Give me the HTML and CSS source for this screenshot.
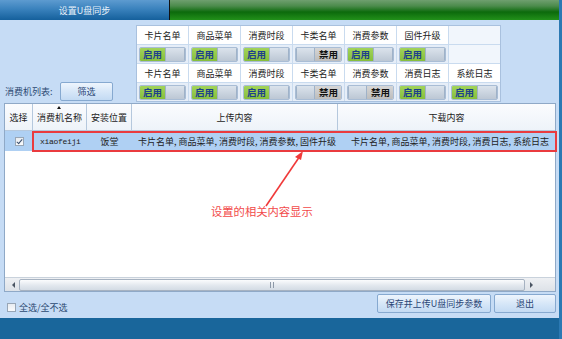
FILE: index.html
```html
<!DOCTYPE html>
<html lang="zh-CN">
<head>
  <meta charset="UTF-8">
  <title>设置U盘同步</title>
  <link rel="stylesheet" href="styles.css">
</head>
<body>

<div class="window">
  <div class="titlebar">
    <div class="tab">设置U盘同步</div>
    <div class="tab-rest"></div>
  </div>

  <div class="main">
    <div class="top">
      <div class="filter">
        <span class="filter-label">消费机列表:</span>
        <button class="btn btn-filter">筛选</button>
      </div>

      <div class="settings">
        <div class="cell head">卡片名单</div>
        <div class="cell head">商品菜单</div>
        <div class="cell head">消费时段</div>
        <div class="cell head">卡类名单</div>
        <div class="cell head">消费参数</div>
        <div class="cell head">固件升级</div>
        <div class="cell empty"></div>

        <div class="cell"><div class="toggle on"><span class="t-on">启用</span><span class="t-knob"></span></div></div>
        <div class="cell"><div class="toggle on"><span class="t-on">启用</span><span class="t-knob"></span></div></div>
        <div class="cell"><div class="toggle on"><span class="t-on">启用</span><span class="t-knob"></span></div></div>
        <div class="cell"><div class="toggle off"><span class="t-knob"></span><span class="t-off">禁用</span></div></div>
        <div class="cell"><div class="toggle on"><span class="t-on">启用</span><span class="t-knob"></span></div></div>
        <div class="cell"><div class="toggle on"><span class="t-on">启用</span><span class="t-knob"></span></div></div>
        <div class="cell empty"></div>

        <div class="cell head">卡片名单</div>
        <div class="cell head">商品菜单</div>
        <div class="cell head">消费时段</div>
        <div class="cell head">卡类名单</div>
        <div class="cell head">消费参数</div>
        <div class="cell head">消费日志</div>
        <div class="cell head">系统日志</div>

        <div class="cell"><div class="toggle on"><span class="t-on">启用</span><span class="t-knob"></span></div></div>
        <div class="cell"><div class="toggle on"><span class="t-on">启用</span><span class="t-knob"></span></div></div>
        <div class="cell"><div class="toggle on"><span class="t-on">启用</span><span class="t-knob"></span></div></div>
        <div class="cell"><div class="toggle off"><span class="t-knob"></span><span class="t-off">禁用</span></div></div>
        <div class="cell"><div class="toggle off"><span class="t-knob"></span><span class="t-off">禁用</span></div></div>
        <div class="cell"><div class="toggle on"><span class="t-on">启用</span><span class="t-knob"></span></div></div>
        <div class="cell"><div class="toggle on"><span class="t-on">启用</span><span class="t-knob"></span></div></div>
      </div>
    </div>

    <div class="grid">
      <div class="grid-head">
        <div class="gh">选择</div>
        <div class="gh sorted">消费机名称</div>
        <div class="gh">安装位置</div>
        <div class="gh">上传内容</div>
        <div class="gh">下载内容</div>
      </div>
      <div class="grid-body">
        <div class="grid-row selected">
          <div class="gc center"><span class="check checked"></span></div>
          <div class="gc mono">xiaofeiji</div>
          <div class="gc center">饭堂</div>
          <div class="gc">卡片名单, 商品菜单, 消费时段, 消费参数, 固件升级</div>
          <div class="gc right">卡片名单, 商品菜单, 消费时段, 消费日志, 系统日志</div>
        </div>

        <!-- annotation drawn over the grid -->
        <div class="mark"></div>
        <svg class="arrow" width="60" height="60" viewBox="0 0 60 60">
          <path d="M4 56 L38 6" stroke="#f03a3a" stroke-width="1.6" fill="none"/>
          <path d="M41 1 L33 7 L39 10 Z" fill="#f03a3a"/>
        </svg>
        <div class="note">设置的相关内容显示</div>
      </div>
      <div class="hscroll">
        <span class="arr arr-left"></span>
        <div class="thumb"><span class="grip"></span></div>
        <span class="arr arr-right"></span>
      </div>
    </div>

    <div class="footer">
      <label class="all"><span class="check"></span>全选/全不选</label>
      <div class="actions">
        <button class="btn btn-save">保存并上传U盘同步参数</button>
        <button class="btn btn-exit">退出</button>
      </div>
    </div>
  </div>

  <div class="bottombar"></div>
</div>

</body>
</html>
```

FILE: styles.css
```css
* {
  box-sizing: border-box;
}

body {
  margin: 0;
  font-family: "Noto Sans CJK SC", "Noto Sans", sans-serif;
  font-size: 9px;
  color: #222;
}

.window {
  width: 562px;
  height: 339px;
  display: flex;
  flex-direction: column;
  background: #c6dcf5;
  border-right: 3px solid #2b79b3;
}

/* title strip */
.titlebar {
  height: 20px;
  display: flex;
}

.tab {
  width: 170px;
  border-right: 1px solid #111;
  background: linear-gradient(#5d9bd0, #3a82bd 45%, #15609c);
  color: #e9f1fa;
  font-size: 9px;
  display: flex;
  align-items: center;
  justify-content: center;
}

.tab-rest {
  flex: 1;
  background: linear-gradient(#6f9f6f, #4c8b4c 30%, #0c6a0c 60%, #22901a);
}

.main {
  flex: 1;
  padding: 5px 3px 0 4px;
  display: flex;
  flex-direction: column;
}

/* top area: filter + settings table */
.top {
  height: 76px;
  display: flex;
  align-items: flex-start;
}

.filter {
  width: 132px;
  align-self: flex-end;
  display: flex;
  align-items: center;
  padding-left: 1px;
}

.filter-label {
  width: 55px;
  color: #2c4a72;
}

.btn {
  font-family: inherit;
  font-size: 9px;
  color: #2a4675;
  background: linear-gradient(#eef5fd, #d7e7f8 50%, #c3daf3);
  border: 1px solid #86a9d0;
  border-radius: 2px;
  padding: 0;
  height: 19px;
  cursor: pointer;
}

.btn-filter {
  width: 53px;
}

.settings {
  display: grid;
  grid-template-columns: repeat(7, 51px);
  grid-auto-rows: 18px;
  border: 1px solid #a9c1de;
  background: #c9dbef;
  gap: 1px;
}

.cell {
  background: #e6eef8;
  display: flex;
  align-items: center;
  justify-content: center;
}

.cell.head {
  background: #fff;
}

.cell.empty {
  background: #f1f6fc;
}

.toggle {
  width: 47px;
  height: 15px;
  display: flex;
  border: 1px solid #a9bdd5;
  border-radius: 2px;
  overflow: hidden;
  font-weight: bold;
  font-size: 9.5px;
}

.t-on {
  width: 25px;
  background: linear-gradient(#a2d35a, #86bf3c);
  color: #1d3f8c;
  display: flex;
  align-items: center;
  padding-left: 3px;
}

.t-knob {
  flex: 1;
  background: linear-gradient(#dbe3ec, #bcc7d4);
  border-left: 1px solid #9fb2c8;
  border-right: 1px solid #9fb2c8;
}

.t-off {
  width: 26px;
  background: linear-gradient(#d6d6d6, #bdbdbd);
  color: #111;
  display: flex;
  align-items: center;
  padding-left: 4px;
}

/* data grid */
.grid {
  margin-top: 2px;
  height: 189px;
  display: flex;
  flex-direction: column;
  border: 1px solid #8fa9c7;
  background: #fff;
}

.grid-head,
.grid-row {
  display: grid;
  grid-template-columns: 28px 54px 45px 206px 1fr;
}

.grid-head {
  height: 27px;
  background: linear-gradient(#fbfcfe, #eef3f9);
  border-bottom: 1px solid #b5c8dd;
}

.gh {
  display: flex;
  align-items: center;
  justify-content: center;
  border-right: 1px solid #b5c8dd;
  position: relative;
}

.gh:last-child {
  border-right: none;
}

.gh.sorted::before {
  content: "";
  position: absolute;
  top: 2px;
  left: 50%;
  margin-left: -3px;
  border-left: 2.5px solid transparent;
  border-right: 2.5px solid transparent;
  border-bottom: 3px solid #111;
}

.grid-body {
  flex: 1;
  position: relative;
}

.grid-row {
  height: 20px;
}

.grid-row.selected {
  background: #afd0f3;
}

.gc {
  display: flex;
  align-items: center;
  padding: 0 6px;
  white-space: nowrap;
  overflow: hidden;
}

.gc.center {
  justify-content: center;
  padding: 0;
}

.gc.right {
  justify-content: flex-end;
}

.gc.mono {
  font-family: "Liberation Mono", monospace;
  font-size: 8px;
  letter-spacing: -0.3px;
  padding-left: 7px;
}

.check {
  display: inline-block;
  width: 9px;
  height: 9px;
  border: 1px solid #98a6b6;
  background: linear-gradient(#e8ecf1, #fafbfc);
  position: relative;
}

.check.checked::after {
  content: "";
  position: absolute;
  left: 2px;
  top: 0px;
  width: 2px;
  height: 5px;
  border: solid #3a4f6e;
  border-width: 0 1.5px 1.5px 0;
  transform: rotate(40deg);
}

.mark {
  position: absolute;
  left: 27px;
  top: 0;
  width: 525px;
  height: 21px;
  border: 2px solid #ea3b3f;
}

.arrow {
  position: absolute;
  left: 257px;
  top: 19px;
}

.note {
  position: absolute;
  left: 206px;
  top: 72px;
  color: #f24a4a;
  font-size: 11.3px;
}

.hscroll {
  height: 14px;
  display: flex;
  align-items: center;
  background: linear-gradient(#eef0f3, #dde2e8);
  border-top: 1px solid #c9d2dc;
  padding: 0 2px;
}

.arr {
  width: 12px;
  display: flex;
  justify-content: center;
}

.arr-left::before {
  content: "";
  border-top: 3px solid transparent;
  border-bottom: 3px solid transparent;
  border-right: 3px solid #4a5563;
}

.arr-right::before {
  content: "";
  border-top: 3px solid transparent;
  border-bottom: 3px solid transparent;
  border-left: 3px solid #4a5563;
}

.thumb {
  width: 506px;
  height: 12px;
  border: 1px solid #a6b2c1;
  border-radius: 2px;
  background: linear-gradient(#fbfcfd, #e4e9ef 50%, #d3dbe4);
  display: flex;
  align-items: center;
  justify-content: flex-end;
  padding-right: 250px;
}

.grip {
  width: 4px;
  height: 6px;
  border-left: 1px solid #8d99a8;
  border-right: 1px solid #8d99a8;
}

/* footer */
.footer {
  flex: 1;
  display: flex;
  justify-content: space-between;
  align-items: flex-start;
  padding-top: 2px;
}

.all {
  display: flex;
  align-items: center;
  gap: 3px;
  margin-top: 7px;
  margin-left: 3px;
  color: #2c4a72;
}

.actions {
  display: flex;
  gap: 3px;
}

.btn-save {
  width: 114px;
}

.btn-exit {
  width: 62px;
}

.bottombar {
  height: 21px;
  background: #19669b;
}
```
